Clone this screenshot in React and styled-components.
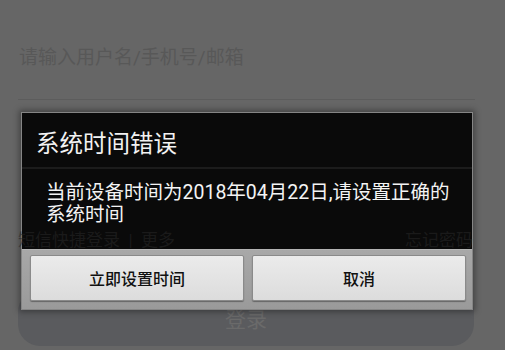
import React from 'react'
import styled, { createGlobalStyle } from 'styled-components'

const GlobalStyle = createGlobalStyle`
html, body {
    margin: 0;
    padding: 0;
    background: #666666;
}
body {
    font-family: Roboto, "Noto Sans CJK SC", sans-serif;
}
`

const Screen = styled.div`
    position: relative;
    width: 505px;
    height: 350px;
    overflow: hidden;
    background: #666666;
`

const LoginForm = styled.div`
    display: flex;
    flex-direction: column;
    padding: 0 30px 0 18px;
`

const InputField = styled.div`
    height: 100px;
    box-sizing: border-box;
    padding: 45px 0 0 1px;
    border-bottom: 1px solid #5c5c5c;
    font-size: 19px;
    line-height: 26px;
    color: #585858;
`

const PasswordField = styled.div`
    height: 130px;
`

const LinksRow = styled.div`
    position: relative;
    z-index: 2;
    display: flex;
    justify-content: space-between;
    height: 20px;
    font-size: 17px;
    line-height: 20px;
    color: rgba(38, 38, 38, 0.6);
    margin-bottom: 40px;
    padding-right: 2px;
`

const LoginButton = styled.div`
    display: flex;
    align-items: center;
    justify-content: center;
    height: 56px;
    margin-right: 1px;
    border-radius: 22px;
    background: #5a5b5e;
    color: #6a6a6a;
    font-size: 21px;
`

const Dialog = styled.div`
    position: absolute;
    z-index: 1;
    left: 21px;
    top: 112px;
    width: 450px;
    height: 196px;
    display: flex;
    flex-direction: column;
    background: #0a0a0a;
    border: 1px solid #858585;
    box-shadow: 0 0 6px 2px rgba(0, 0, 0, 0.35);
`

const DialogTitle = styled.div`
    height: 56px;
    box-sizing: border-box;
    padding: 16px 0 0 14px;
    font-size: 23.5px;
    line-height: 30px;
    color: #f2f2f2;
    border-bottom: 2px solid #1c1c1c;
`

const DialogMessage = styled.div`
    flex: 1;
    padding: 13px 14px 0 24px;
    font-size: 19.5px;
    line-height: 22px;
    color: #f4f4f4;
`

const ButtonBar = styled.div`
    height: 60px;
    box-sizing: border-box;
    display: grid;
    grid-template-columns: 1fr 1fr;
    gap: 8px;
    padding: 5px 6px 8px 8px;
    background: linear-gradient(#a8a8a8, #9a9a9a);
    border-top: 1px solid #b4b4b4;
`

const DialogButton = styled.button`
    display: flex;
    align-items: center;
    justify-content: center;
    border: 1px solid #8a8a8a;
    border-radius: 2px;
    background: linear-gradient(#ebebeb, #dcdcdc);
    box-shadow: 0 1px 1px rgba(0, 0, 0, 0.35);
    font-family: Roboto, "Noto Sans CJK SC", sans-serif;
    font-size: 16px;
    font-weight: 500;
    color: #111111;
    padding: 0;
`

export default function App() {
    return (
        <Screen>
            <GlobalStyle />
            <LoginForm>
                <InputField>请输入用户名/手机号/邮箱</InputField>
                <PasswordField />
                <LinksRow>
                    <span>短信快捷登录 &nbsp;|&nbsp; 更多</span>
                    <span>忘记密码</span>
                </LinksRow>
                <LoginButton>登录</LoginButton>
            </LoginForm>

            <Dialog>
                <DialogTitle>系统时间错误</DialogTitle>
                <DialogMessage>
                    当前设备时间为2018年04月22日,请设置正确的系统时间
                </DialogMessage>
                <ButtonBar>
                    <DialogButton>立即设置时间</DialogButton>
                    <DialogButton>取消</DialogButton>
                </ButtonBar>
            </Dialog>
        </Screen>
    )
}
